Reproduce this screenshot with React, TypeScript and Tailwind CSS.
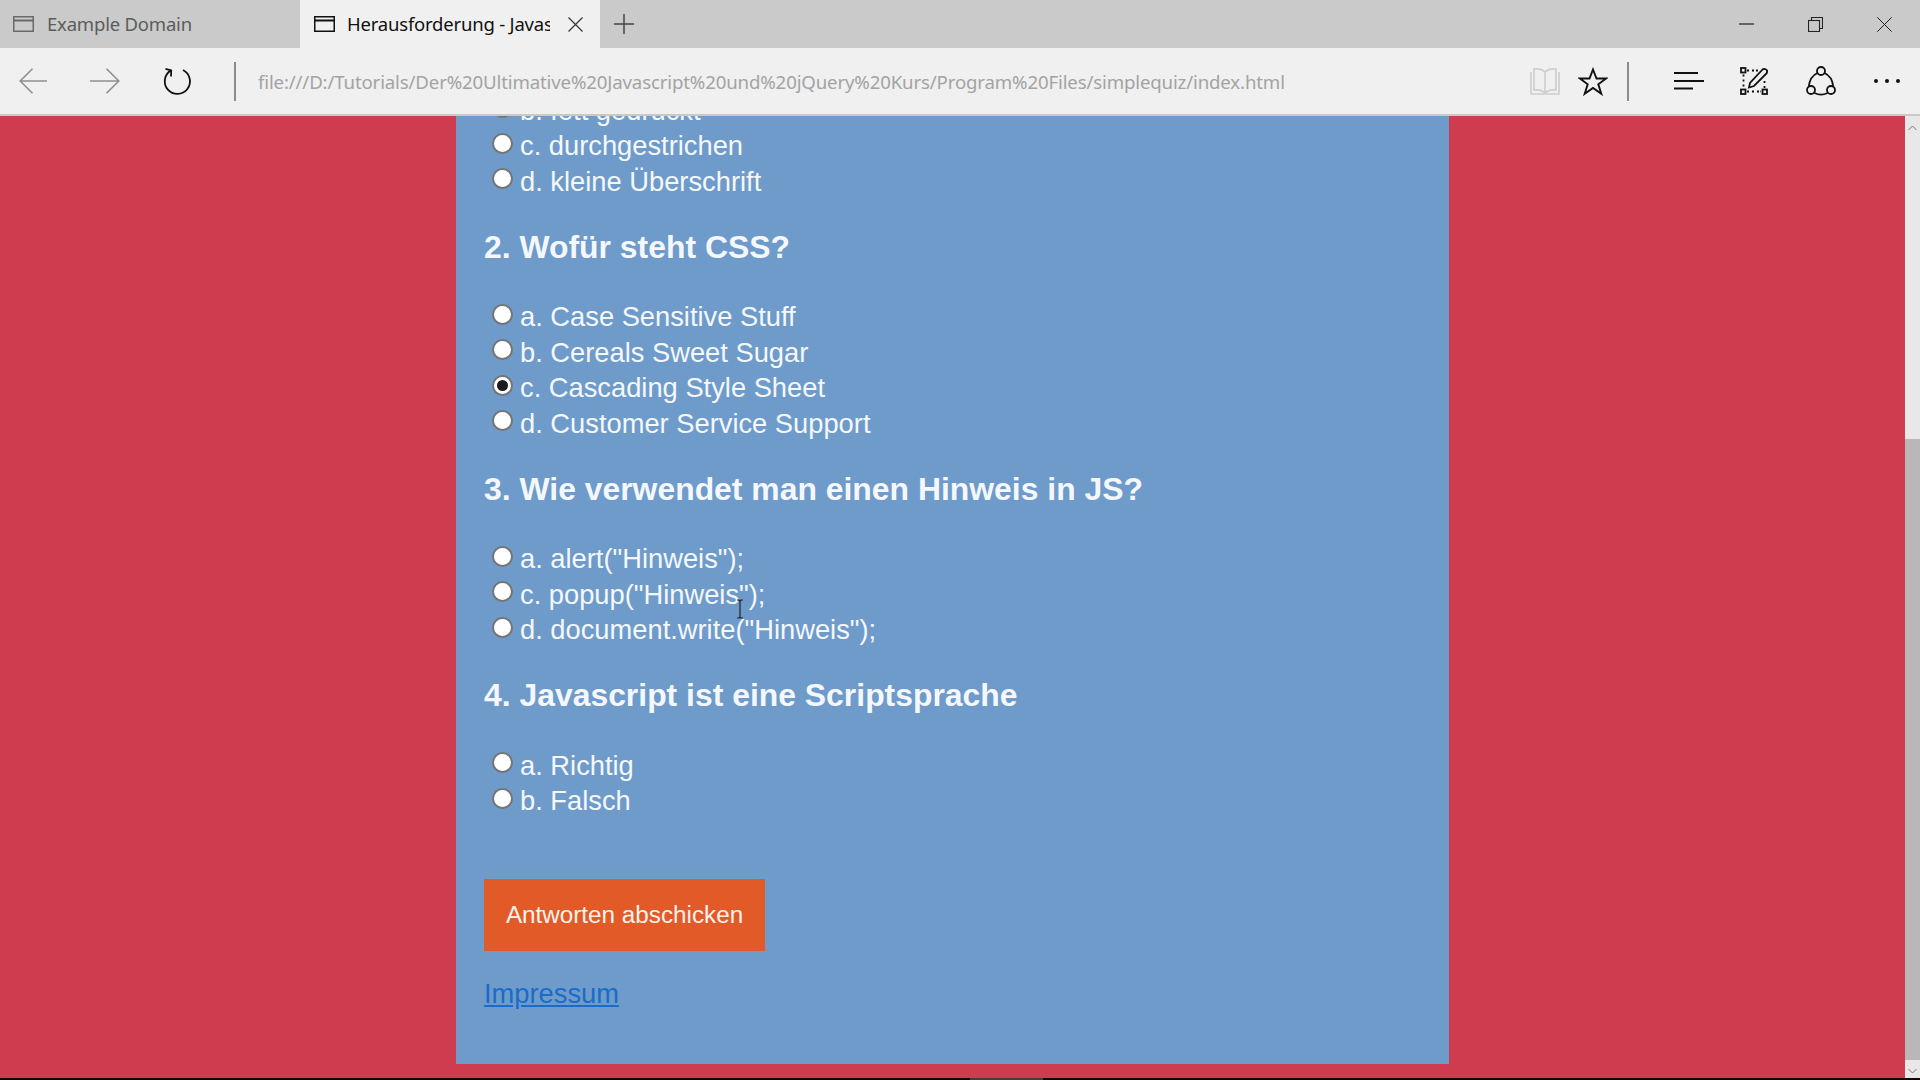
const Radio = ({ checked = false }: { checked?: boolean }) => (
  <span className="ml-2 mr-[7px] -mt-[4px] flex h-[21px] w-[21px] shrink-0 items-center justify-center rounded-full border-2 border-[#757575] bg-white">
    {checked && <span className="block h-[11px] w-[11px] rounded-full bg-[#1c1c1e]" />}
  </span>
);

const Option = ({ label, checked }: { label: string; checked?: boolean }) => (
  <label className="flex h-[35.5px] items-center whitespace-nowrap">
    <Radio checked={checked} />
    <span className="pt-[1px]">{label}</span>
  </label>
);

const Question = ({ title, options, checked }: { title: string; options: string[]; checked?: number }) => (
  <section>
    <h2 className="mb-[32px] mt-[28px] h-[40px] text-[31.9px] font-bold leading-[40px]">{title}</h2>
    {options.map((o, i) => (
      <Option key={o} label={o} checked={i === checked} />
    ))}
  </section>
);

const TabIcon = ({ color }: { color: string }) => (
  <svg width="21" height="16" viewBox="0 0 21 16" fill="none" stroke={color} strokeWidth="1.5">
    <rect x="0.75" y="0.75" width="19.5" height="14.5" />
    <path d="M1 4.5h19" strokeWidth="2" />
  </svg>
);

const TabBar = () => (
  <div className="flex h-[48px] shrink-0 items-stretch bg-[#cacaca] font-['Noto_Sans',sans-serif] text-[18.5px]">
    <div className="flex w-[300px] items-center pl-[13px] text-[#5c5c5c]">
      <TabIcon color="#6a6a6a" />
      <span className="ml-[13px] tracking-[-0.2px]">Example Domain</span>
    </div>
    <div className="flex w-[300px] items-center bg-[#f0f0f0] pl-[14px] text-[#111]">
      <TabIcon color="#111" />
      <span className="ml-[12px] w-[203px] overflow-hidden whitespace-nowrap tracking-[-0.2px]">Herausforderung - Javascript</span>
      <svg className="ml-[18px]" width="15" height="15" viewBox="0 0 15 15" stroke="#333" strokeWidth="1.2">
        <path d="M0.5 0.5l14 14M14.5 0.5l-14 14" />
      </svg>
    </div>
    <div className="flex items-center pl-[14px]">
      <svg width="20" height="20" viewBox="0 0 20 20" stroke="#444" strokeWidth="1.5">
        <path d="M10 0v20M0 10h20" />
      </svg>
    </div>
    <div className="ml-auto flex items-center">
      <svg className="mr-[54px]" width="15" height="2" viewBox="0 0 15 2" stroke="#222" strokeWidth="1.2">
        <path d="M0 1h15" />
      </svg>
      <svg className="mr-[54px]" width="15" height="15" viewBox="0 0 15 15" fill="none" stroke="#222" strokeWidth="1.1">
        <rect x="0.5" y="3.5" width="11" height="11" />
        <path d="M3.5 3.5v-3h11v11h-3" />
      </svg>
      <svg className="mr-[28px]" width="15" height="15" viewBox="0 0 15 15" stroke="#222" strokeWidth="1">
        <path d="M0.3 0.3l14.4 14.4M14.7 0.3l-14.4 14.4" />
      </svg>
    </div>
  </div>
);

const Toolbar = () => (
  <div className="flex h-[68px] shrink-0 items-center border-b-2 border-[#c9c9c9] bg-[#f0f0f0] font-['Noto_Sans',sans-serif]">
    <svg className="ml-[19px]" width="28" height="26" viewBox="0 0 28 26" fill="none" stroke="#8f8f8f" strokeWidth="1.6">
      <path d="M28 13H1.5M13.5 0.8L1.2 13l12.3 12.2" />
    </svg>
    <svg className="ml-[43px]" width="30" height="26" viewBox="0 0 30 26" fill="none" stroke="#8f8f8f" strokeWidth="1.6">
      <path d="M0 13h28.5M16.5 0.8L28.8 13 16.5 25.2" />
    </svg>
    <svg className="ml-[43px]" width="29" height="28" viewBox="0 0 29 28" fill="none" stroke="#111" strokeWidth="1.8">
      <path d="M8 3.4A12.6 12.6 0 1 0 20 3" />
      <path d="M2.5 1.8L8.2 3.5 8 9.5" />
    </svg>
    <span className="ml-[42px] h-[39px] w-[2px] bg-[#8c8c8c]" />
    <span className="ml-[22px] whitespace-nowrap pt-[2px] text-[18.65px] tracking-[-0.15px] text-[#a3a3a3]">
      file:///D:/Tutorials/Der%20Ultimative%20Javascript%20und%20jQuery%20Kurs/Program%20Files/simplequiz/index.html
    </span>
    <div className="ml-auto flex items-center">
      <svg width="30" height="28" viewBox="0 0 30 28" fill="none" stroke="#cdcdcd" strokeWidth="1.6">
        <path d="M15 5C12 2 8 1.5 4 2v21c4-.5 8 0 11 3 3-3 7-3.5 11-3V2c-4-.5-8 0-11 3zM15 5v21" />
        <path d="M1 5v22h28V5" />
      </svg>
      <svg className="ml-[18px]" width="30" height="29" viewBox="0 0 30 29" fill="none" stroke="#111" strokeWidth="1.9">
        <path d="M15 2.5l3.5 9h9.5l-7.7 5.8 3 9.5L15 21l-8.300 5.800 3-9.500L2 11.500h9.500z" />
      </svg>
      <span className="ml-[19px] h-[39px] w-[2px] bg-[#8c8c8c]" />
      <svg className="ml-[45px]" width="30" height="18" viewBox="0 0 30 18" stroke="#111" strokeWidth="1.8">
        <path d="M0 1h24M0 9h30M0 16.500h19" />
      </svg>
      <svg className="ml-[36px]" width="28" height="28" viewBox="0 0 28 28" fill="none" stroke="#111" strokeWidth="1.800">
        <path d="M7 3.500h3M12 3.500h2M16 3.500h3M3.500 7.500v3M3.500 12.500v3M3.500 17.500v3M24.500 14v3M24.500 19v2M7 24.500h3M12 24.500h3M17 24.500h4" strokeDasharray="2 1.500" />
        <rect x="1" y="1" width="4.500" height="4.500" />
        <rect x="1" y="22.500" width="4.500" height="4.500" />
        <rect x="22.500" y="22.500" width="4.500" height="4.500" />
        <path d="M9 20.500l1-4.500L22.500 2.500c1-1 4-.5 4.500 1 .5 1 0 2-.5 3L14 19z" />
      </svg>
      <svg className="ml-[38px]" width="30" height="30" viewBox="0 0 30 30" fill="none" stroke="#111" strokeWidth="1.800">
        <circle cx="15" cy="5" r="4" />
        <circle cx="5" cy="24" r="4" />
        <circle cx="25" cy="24" r="4" />
        <path d="M11.500 7C7 9 3.500 14 2.800 20.500M18.500 7C23 9 26.500 14 27.200 20.500M8.500 27c4 2 9 2 13 0" />
      </svg>
      <div className="ml-[38px] mr-[20px] flex gap-[7px]">
        <span className="h-[4px] w-[4px] rounded-full bg-[#111]" />
        <span className="h-[4px] w-[4px] rounded-full bg-[#111]" />
        <span className="h-[4px] w-[4px] rounded-full bg-[#111]" />
      </div>
    </div>
  </div>
);

const Scrollbar = () => (
  <div className="flex w-[15px] shrink-0 flex-col bg-[#e8e8e8]">
    <svg className="mx-auto mt-[9px]" width="9" height="6" viewBox="0 0 9 6" fill="none" stroke="#777" strokeWidth="1">
      <path d="M0.500 5L4.500 1l4 4" />
    </svg>
    <div className="mt-[308px] h-[621px] bg-[#b9b7b8]" />
    <svg className="mx-auto mt-[8px]" width="9" height="6" viewBox="0 0 9 6" fill="none" stroke="#777" strokeWidth="1">
      <path d="M0.500 1L4.500 5l4-4" />
    </svg>
  </div>
);

const App = () => (
  <div className="relative flex h-screen flex-col overflow-hidden bg-[#cf3b4f]">
    <TabBar />
    <Toolbar />
    <div className="flex min-h-0 flex-1">
      <main className="min-w-0 flex-1 overflow-hidden">
        <div className="ml-[456px] w-[993px] pb-[52px] pl-[28px] font-['Liberation_Sans',Arial,sans-serif] text-[27.3px] leading-[35.5px] text-[#f4f8fc] bg-[#6f9bcb] -mt-[24px]">
          <Option label="b. fett gedruckt" />
          <Option label="c. durchgestrichen" />
          <Option label="d. kleine Überschrift" />
          <Question
            title="2. Wofür steht CSS?"
            checked={2}
            options={["a. Case Sensitive Stuff", "b. Cereals Sweet Sugar", "c. Cascading Style Sheet", "d. Customer Service Support"]}
          />
          <Question
            title="3. Wie verwendet man einen Hinweis in JS?"
            options={['a. alert("Hinweis");', 'c. popup("Hinweis");', 'd. document.write("Hinweis");']}
          />
          <Question title="4. Javascript ist eine Scriptsprache" options={["a. Richtig", "b. Falsch"]} />
          <button className="mt-[61px] block h-[72px] w-[281px] bg-[#e25a28] text-center text-[24.25px] text-[#fdf3ec]">
            Antworten abschicken
          </button>
          <a href="#" className="mt-[25px] block w-fit text-[27.3px] leading-[36px] text-[#1a6cc9] underline">
            Impressum
          </a>
        </div>
      </main>
      <Scrollbar />
    </div>
    <div className="h-[2px] shrink-0 bg-[#12060a]">
      <div className="ml-[970px] h-[2px] w-[73px] bg-[#4a3a3e]" />
    </div>
    {/* text cursor over the page */}
    <svg className="absolute left-[736px] top-[599px]" width="8" height="20" viewBox="0 0 8 20" fill="none" stroke="#222" strokeWidth="1.200">
      <path d="M1 1h2l1 1 1-1h2M4 2v16M1 19h2l1-1 1 1h2" />
    </svg>
  </div>
);

export default App;
